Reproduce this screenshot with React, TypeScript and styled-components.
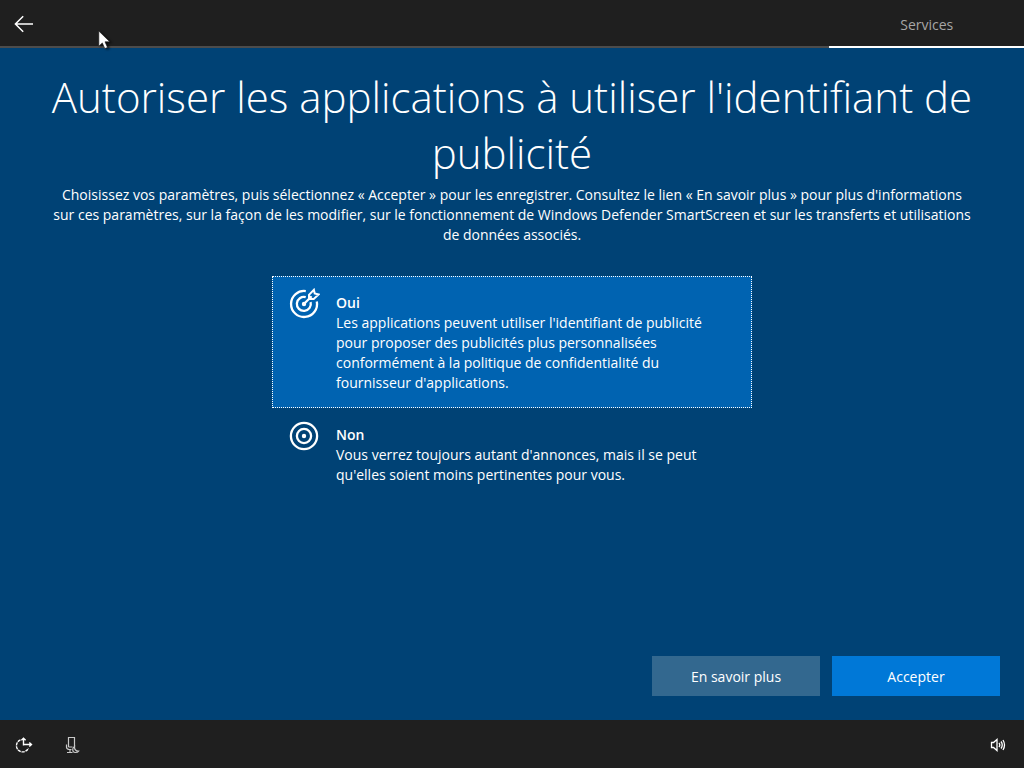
import React from "react";
import styled, { createGlobalStyle } from "styled-components";

const GlobalStyle = createGlobalStyle`
  * { box-sizing: border-box; }
  body {
    margin: 0;
    background: #004275;
    color: #fff;
    font-family: "Segoe UI", "Open Sans", "Noto Sans", sans-serif;
    font-size: 14px;
    line-height: 20px;
  }
  button { font: inherit; color: inherit; border: 0; padding: 0; background: none; }
`;

const Page = styled.div`
  min-height: 100vh;
  display: flex;
  flex-direction: column;
`;

const TopBar = styled.header`
  position: relative;
  display: flex;
  justify-content: space-between;
  height: 48px;
  background: #1f1f1f;
  box-shadow: inset 0 -2px #4c4c4c;
`;

const IconButton = styled.button`
  width: 48px;
  height: 48px;
  display: flex;
  align-items: center;
  justify-content: center;
`;

const Tab = styled.div`
  width: 19%;
  display: flex;
  align-items: center;
  justify-content: center;
  border-bottom: 2px solid #fff;
  padding-top: 4px;
  color: #a6a6a6;
`;

const Pointer = styled.svg`
  position: absolute;
  left: 98px;
  top: 30px;
  z-index: 1;
  overflow: visible;
  filter: drop-shadow(2px 1px 1px rgba(0, 0, 0, 0.6));
`;

const Main = styled.main`
  flex: 1;
  display: flex;
  flex-direction: column;
  align-items: center;
  padding: 21px 24px 24px;
`;

const Title = styled.h1`
  margin: 0 0 4px;
  font-size: 42px;
  line-height: 56px;
  font-weight: 300;
  text-align: center;
`;

const Intro = styled.p`
  margin: 0;
  max-width: 936px;
  text-align: center;
`;

const Options = styled.form`
  width: 100%;
  max-width: 480px;
  margin-top: 31px;
`;

const Option = styled.label`
  display: flex;
  gap: 16px;
  padding: 11px 31px 14px 15px;
  border: 1px dotted transparent;

  &:has(input:checked) {
    background: #0063b1;
    border-color: #fff;
  }
`;

const Radio = styled.input`
  appearance: none;
  position: absolute;
  margin: 0;
  outline: none;
`;

const OptionText = styled.span`
  flex: 1;
  padding-top: 5px;
`;

const OptionName = styled.strong`
  display: block;
  font-weight: 600;
`;

const Actions = styled.div`
  align-self: flex-end;
  display: flex;
  gap: 12px;
  margin-top: auto;
`;

const ActionButton = styled.button<{ $primary?: boolean }>`
  && {
    width: 168px;
    height: 40px;
    padding-top: 2px;
    background: ${(p) => (p.$primary ? "#0078d7" : "#33688f")};
  }
`;

const BottomBar = styled.footer`
  display: flex;
  justify-content: space-between;
  height: 48px;
  padding: 1px 2px 0 0;
  background: #1f1f1f;
`;

const Tools = styled.div`
  display: flex;
`;

const BackIcon = () => (
  <svg width="20" height="18" viewBox="0 0 20 18" fill="none" stroke="#fff" strokeWidth="1.5">
    <path d="M19 9H1.5M9.2 1.2 1.4 9l7.8 7.8" />
  </svg>
);

const TargetArrowIcon = () => (
  <svg width="32" height="32" viewBox="0 0 32 32" fill="none" stroke="#fff" strokeWidth="2.3">
    <path d="M17.8 3.1A13 13 0 1 0 28.8 13.4" />
    <path d="M17.7 9.2A7 7 0 1 0 22.6 14.1" />
    <circle cx="16" cy="16" r="2.2" fill="#fff" stroke="none" />
    <path d="M15.6 16.2 23.6 8.3" />
    <path d="M21 11V6.8l4.9-5 .8 3.7 3.9 1-4.9 4.5H21Z" strokeWidth="2" />
  </svg>
);

const TargetIcon = () => (
  <svg width="32" height="32" viewBox="0 0 32 32" fill="none" stroke="#fff" strokeWidth="2.3">
    <circle cx="16" cy="16" r="13.1" />
    <circle cx="16" cy="16" r="7.1" />
    <circle cx="16" cy="16" r="2.2" fill="#fff" stroke="none" />
  </svg>
);

const EaseIcon = () => (
  <svg width="18" height="18" viewBox="0 0 18 18" fill="none" stroke="#fff" strokeWidth="1.4">
    <path d="M5.5 3.9A6.2 6.2 0 1 0 13.4 12" strokeDasharray="3.2 .8" />
    <path d="M8.5 9.5V2.2M6.4 4.3l2.1-2.1 2.1 2.1M8 8.5h8.4M14.3 6.4l2.2 2.1-2.2 2.1" />
  </svg>
);

const MicrophoneIcon = () => (
  <svg width="18" height="18" viewBox="0 0 18 18" fill="none" stroke="#c8c8c8" strokeWidth="1.2">
    <path d="M5.5 11V1.5h6V11M5.5 11h4M3.5 8.5v2.5q0 2 2.5 2.5h2.5M7 13.5v3M4 16.5h5.5" />
    <path d="M11.5 10.5c-2.5 1.5-2.5 6 .8 6 1.6 0 2.7-.4 3.3-1.4-2.5.1-4.4-1.6-4.1-4.6Z" />
  </svg>
);

const VolumeIcon = () => (
  <svg width="16" height="16" viewBox="0 0 16 16" fill="none" stroke="#fff" strokeWidth="1.3">
    <path d="M1.5 5.5h2l3.5-3v11l-3.5-3h-2Z" />
    <path d="M9 6q1.5 2 0 4M11 4.5q2.5 3.5 0 7M13 3q3 5 0 10" />
  </svg>
);

const choices = [
  {
    id: "oui",
    name: "Oui",
    Icon: TargetArrowIcon,
    text: "Les applications peuvent utiliser l'identifiant de publicité pour proposer des publicités plus personnalisées conformément à la politique de confidentialité du fournisseur d'applications.",
  },
  {
    id: "non",
    name: "Non",
    Icon: TargetIcon,
    text: "Vous verrez toujours autant d'annonces, mais il se peut qu'elles soient moins pertinentes pour vous.",
  },
];

export default function App() {
  return (
    <Page>
      <GlobalStyle />
      <TopBar>
        <IconButton type="button" aria-label="Retour">
          <BackIcon />
        </IconButton>
        <Tab>Services</Tab>
        <Pointer width="13" height="20" viewBox="0 0 13 20" aria-hidden="true">
          <path d="M.8 1v15.2l3.5-3.3 2.5 5.7 2.7-1.2L7 11.8h4.8Z" fill="#fff" stroke="#111" strokeWidth=".6" />
        </Pointer>
      </TopBar>
      <Main>
        <Title>Autoriser les applications à utiliser l'identifiant de publicité</Title>
        <Intro>
          Choisissez vos paramètres, puis sélectionnez «&nbsp;Accepter&nbsp;» pour les enregistrer. Consultez le
          lien «&nbsp;En savoir plus&nbsp;» pour plus d'informations sur&nbsp;ces paramètres, sur la façon de les
          modifier, sur le fonctionnement de Windows Defender SmartScreen et sur les transferts et utilisations
          de&nbsp;données associés.
        </Intro>
        <Options>
          {choices.map(({ id, name, Icon, text }) => (
            <Option key={id} htmlFor={id}>
              <Radio type="radio" name="identifiant" id={id} defaultChecked={id === "oui"} />
              <Icon />
              <OptionText>
                <OptionName>{name}</OptionName>
                {text}
              </OptionText>
            </Option>
          ))}
        </Options>
        <Actions>
          <ActionButton type="button">En savoir plus</ActionButton>
          <ActionButton type="button" $primary>
            Accepter
          </ActionButton>
        </Actions>
      </Main>
      <BottomBar>
        <Tools>
          <IconButton type="button" aria-label="Options d'ergonomie">
            <EaseIcon />
          </IconButton>
          <IconButton type="button" aria-label="Microphone">
            <MicrophoneIcon />
          </IconButton>
        </Tools>
        <IconButton type="button" aria-label="Volume">
          <VolumeIcon />
        </IconButton>
      </BottomBar>
    </Page>
  );
}
